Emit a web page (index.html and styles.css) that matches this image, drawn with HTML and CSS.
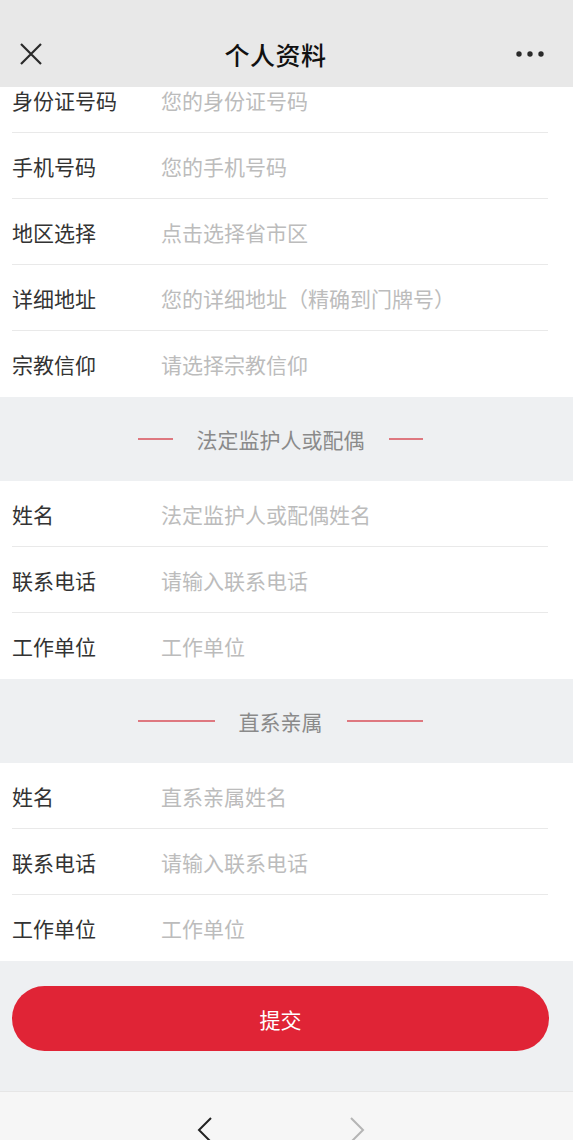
FILE: index.html
```html
<!DOCTYPE html>
<html lang="zh-CN">
<head>
  <meta charset="UTF-8">
  <meta name="viewport" content="width=device-width, initial-scale=1.0">
  <title>个人资料</title>
  <link rel="stylesheet" href="styles.css">
</head>
<body>
  <div class="topbar">
    <span class="topbar-close">
      <svg width="22" height="22" viewBox="0 0 22 22"><path d="M1 1 L21 21 M21 1 L1 21" stroke="#2a2a2a" stroke-width="2.2" fill="none"/></svg>
    </span>
    <div class="topbar-title">个人资料</div>
    <span class="topbar-more">
      <svg width="28" height="8" viewBox="0 0 28 8"><circle cx="3" cy="4" r="2.7" fill="#2a2a2a"/><circle cx="14" cy="4" r="2.7" fill="#2a2a2a"/><circle cx="25" cy="4" r="2.7" fill="#2a2a2a"/></svg>
    </span>
  </div>

  <div class="content">
    <div class="group">
      <div class="row"><span class="label">身份证号码</span><span class="hint">您的身份证号码</span></div>
      <div class="row"><span class="label">手机号码</span><span class="hint">您的手机号码</span></div>
      <div class="row"><span class="label">地区选择</span><span class="hint">点击选择省市区</span></div>
      <div class="row"><span class="label">详细地址</span><span class="hint">您的详细地址（精确到门牌号）</span></div>
      <div class="row"><span class="label">宗教信仰</span><span class="hint">请选择宗教信仰</span></div>
    </div>

    <div class="section">
      <div class="section-inner">
        <span class="section-line"></span>
        <span class="section-title">法定监护人或配偶</span>
        <span class="section-line"></span>
      </div>
    </div>

    <div class="group">
      <div class="row"><span class="label">姓名</span><span class="hint">法定监护人或配偶姓名</span></div>
      <div class="row"><span class="label">联系电话</span><span class="hint">请输入联系电话</span></div>
      <div class="row"><span class="label">工作单位</span><span class="hint">工作单位</span></div>
    </div>

    <div class="section">
      <div class="section-inner">
        <span class="section-line"></span>
        <span class="section-title">直系亲属</span>
        <span class="section-line"></span>
      </div>
    </div>

    <div class="group">
      <div class="row"><span class="label">姓名</span><span class="hint">直系亲属姓名</span></div>
      <div class="row"><span class="label">联系电话</span><span class="hint">请输入联系电话</span></div>
      <div class="row"><span class="label">工作单位</span><span class="hint">工作单位</span></div>
    </div>

    <div class="footer">
      <button class="submit-btn">提交</button>
    </div>
  </div>

  <div class="toolbar">
    <svg class="nav-arrow" width="16" height="26" viewBox="0 0 16 26"><path d="M14 1 L2 13 L14 25" stroke="#222" stroke-width="2" fill="none"/></svg>
    <svg class="nav-arrow" width="16" height="26" viewBox="0 0 16 26"><path d="M2 1 L14 13 L2 25" stroke="#b5b5b5" stroke-width="2" fill="none"/></svg>
  </div>
</body>
</html>
```

FILE: styles.css
```css
body {
  margin: 0;
  padding: 0;
  width: 573px;
  height: 1140px;
  overflow: hidden;
  background-color: #fff;
  font-family: "Noto Sans CJK SC", "Noto Sans", sans-serif;
}

.topbar {
  position: relative;
  z-index: 1;
  height: 87px;
  padding-top: 20px;
  box-sizing: border-box;
  background-color: #e8e8e8;
  display: flex;
  align-items: center;
  justify-content: space-between;
}

.topbar-close {
  display: flex;
  margin-left: 20px;
  width: 120px;
}

.topbar-title {
  font-size: 25px;
  font-weight: 500;
  letter-spacing: 0.5px;
  color: #111;
  margin-right: 13px;
}

.topbar-more {
  display: flex;
  justify-content: flex-end;
  width: 120px;
  margin-right: 29px;
}

/* list scrolled up a bit under the header */
.content {
  margin-top: -20px;
}

.group {
  background-color: #fff;
}

.row {
  height: 66px;
  margin: 0 25px 0 12px;
  display: flex;
  align-items: center;
  border-bottom: 1px solid #e9e9e9;
  box-sizing: border-box;
  font-size: 21px;
}

.row:last-child {
  border-bottom: none;
}

.label {
  width: 149px;
  color: #333;
}

.hint {
  color: #bcbcbc;
}

.section {
  height: 84px;
  background-color: #eef0f2;
  display: flex;
  align-items: center;
}

.section-inner {
  margin-left: 138px;
  width: 285px;
  height: 30px;
  display: flex;
  align-items: center;
  gap: 24px;
}

.section-line {
  flex: 1;
  height: 2px;
  background-color: #de7880;
}

.section-title {
  font-size: 21px;
  line-height: 30px;
  color: #8a8a8a;
}

.footer {
  height: 130px;
  background-color: #eef0f2;
  padding: 25px 24px 0 12px;
  box-sizing: border-box;
}

.submit-btn {
  width: 100%;
  height: 65px;
  border: none;
  border-radius: 33px;
  background-color: #e02436;
  color: #fff;
  font-family: "Noto Sans CJK SC", "Noto Sans", sans-serif;
  font-size: 21px;
  padding: 0;
}

.toolbar {
  height: 60px;
  background-color: #f6f6f6;
  border-top: 1px solid #e6e6e6;
  display: flex;
  align-items: flex-start;
  gap: 136px;
  padding: 25px 0 0 197px;
  box-sizing: border-box;
}
```
